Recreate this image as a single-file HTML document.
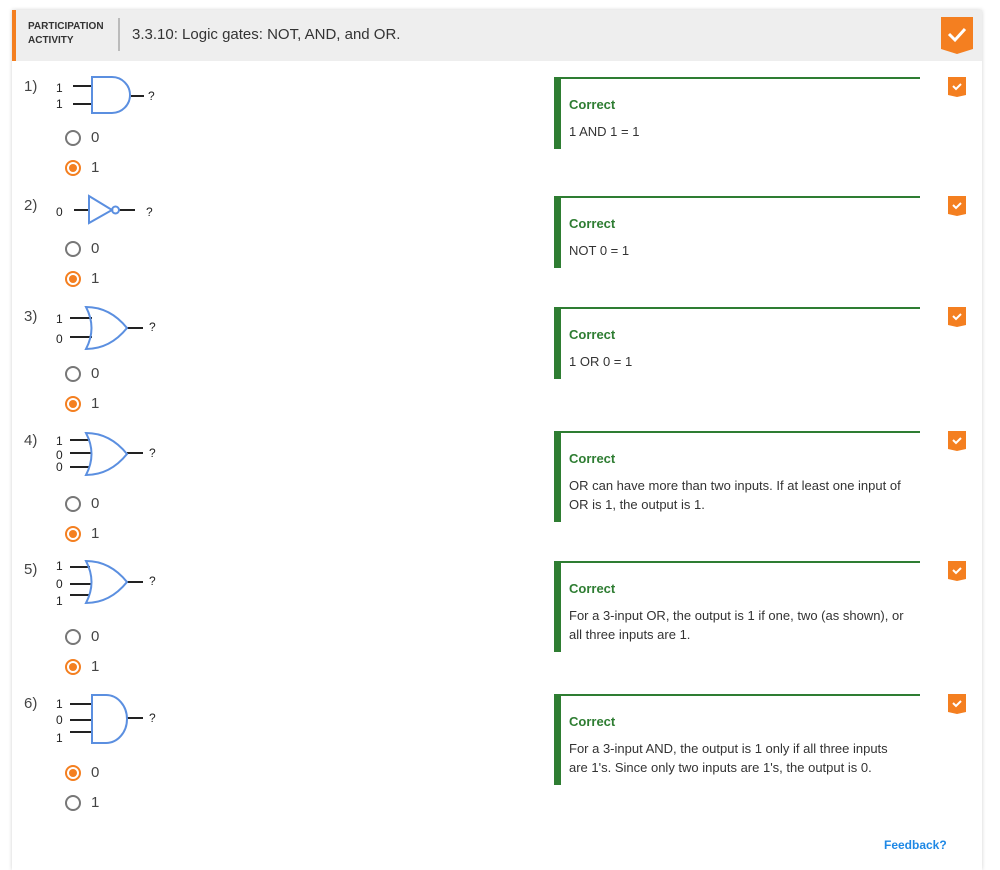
<!DOCTYPE html>
<html><head><meta charset="utf-8"><style>
body{margin:0;background:#fff;font-family:"Liberation Sans",sans-serif;color:#333;width:1000px;height:848px;overflow:hidden;position:relative}
.card{position:absolute;left:12px;top:10px;width:970px;height:860px;background:#fff;box-shadow:0 0 4px rgba(0,0,0,.18)}
.hdr{position:absolute;left:12px;top:10px;width:970px;height:51px;background:#eee;}
.hdr .bar{position:absolute;left:0;top:0;width:4px;height:51px;background:#f47f20}
.pa{position:absolute;left:28px;top:20px;font-size:10px;font-weight:bold;line-height:14px;color:#333}
.sep{position:absolute;left:118px;top:18px;width:2px;height:33px;background:#bbb}
.title{position:absolute;left:132px;top:26px;font-size:15px;color:#333}
.a{position:absolute}
.num{position:absolute;left:24px;font-size:15px;color:#444}
.r{position:absolute;left:65px;width:12px;height:12px;border:2px solid #777;border-radius:50%}
.r.on{border-color:#f47f20}
.r.on::after{content:"";position:absolute;left:2px;top:2px;width:8px;height:8px;border-radius:50%;background:#f47f20}
.rl{position:absolute;left:91px;font-size:15px;color:#444}
.fb{position:absolute;left:554px;width:359px;border-left:7px solid #2e7d32;border-top:2px solid #2e7d32}
.fb b{position:absolute;left:8px;top:18px;font-size:13px;color:#2e7d32}
.fb p{position:absolute;left:8px;top:43px;margin:0;font-size:13px;line-height:19px;color:#333;width:340px}
.bd{position:absolute;left:948px;width:18px;height:20px}
</style></head><body>
<div class="card"></div>
<div class="hdr"><div class="bar"></div></div>
<div class="pa">PARTICIPATION<br>ACTIVITY</div>
<div class="sep"></div>
<div class="title">3.3.10: Logic gates: NOT, AND, and OR.</div>
<svg class="a" style="left:941px;top:17px" width="32" height="37" viewBox="0 0 32 37"><path d="M0 0H32V32L16 37L0 32Z" fill="#f47f20"/><path d="M8 17L14 23L24 12" stroke="#fff" stroke-width="3" fill="none"/></svg>

<svg class="a" style="left:0;top:0" width="200" height="848" font-family="Liberation Sans,sans-serif" font-size="12" fill="#222">
<g stroke="#222" stroke-width="2">
<path d="M73 86H92M73 104H92M131 96H144"/>
<path d="M74 210H89M119 210H135"/>
<path d="M70 318H92M70 337H92M127 328H143"/>
<path d="M70 440H90M70 453H92M70 467H90M127 453H143"/>
<path d="M70 567H90M70 584H92M70 595H90M127 582H143"/>
<path d="M70 704H92M70 720H92M70 732H92M127 718H143"/>
</g>
<g stroke="#5b8fe0" stroke-width="2" fill="none">
<path d="M92 77H112A18 18 0 0 1 112 113H92Z"/>
<path d="M89 196L112 210L89 223Z"/><circle cx="115.5" cy="210" r="3.5"/>
<path d="M86 307Q110 307 127 328Q110 349 86 349Q97 328 86 307Z"/>
<path d="M86 433Q110 433 127 454Q110 475 86 475Q97 454 86 433Z"/>
<path d="M86 561Q110 561 127 582Q110 603 86 603Q97 582 86 561Z"/>
<path d="M92 695H106A21 24 0 0 1 106 743H92Z"/>
</g>
<text x="56" y="92">1</text><text x="56" y="108">1</text><text x="148" y="100">?</text>
<text x="56" y="216">0</text><text x="146" y="216">?</text>
<text x="56" y="323">1</text><text x="56" y="343">0</text><text x="149" y="331">?</text>
<text x="56" y="445">1</text><text x="56" y="459">0</text><text x="56" y="471">0</text><text x="149" y="457">?</text>
<text x="56" y="570">1</text><text x="56" y="588">0</text><text x="56" y="605">1</text><text x="149" y="585">?</text>
<text x="56" y="708">1</text><text x="56" y="724">0</text><text x="56" y="742">1</text><text x="149" y="722">?</text>
</svg>

<div class="num" style="top:78px">1)</div>
<div class="r" style="top:130px"></div><div class="rl" style="top:129px">0</div>
<div class="r on" style="top:160px"></div><div class="rl" style="top:159px">1</div>
<div class="num" style="top:197px">2)</div>
<div class="r" style="top:241px"></div><div class="rl" style="top:240px">0</div>
<div class="r on" style="top:271px"></div><div class="rl" style="top:270px">1</div>
<div class="num" style="top:308px">3)</div>
<div class="r" style="top:366px"></div><div class="rl" style="top:365px">0</div>
<div class="r on" style="top:396px"></div><div class="rl" style="top:395px">1</div>
<div class="num" style="top:432px">4)</div>
<div class="r" style="top:496px"></div><div class="rl" style="top:495px">0</div>
<div class="r on" style="top:526px"></div><div class="rl" style="top:525px">1</div>
<div class="num" style="top:561px">5)</div>
<div class="r" style="top:629px"></div><div class="rl" style="top:628px">0</div>
<div class="r on" style="top:659px"></div><div class="rl" style="top:658px">1</div>
<div class="num" style="top:695px">6)</div>
<div class="r on" style="top:765px"></div><div class="rl" style="top:764px">0</div>
<div class="r" style="top:795px"></div><div class="rl" style="top:794px">1</div>

<div class="fb" style="top:77px;height:70px"><b>Correct</b><p>1 AND 1 = 1</p></div>
<div class="fb" style="top:196px;height:70px"><b>Correct</b><p>NOT 0 = 1</p></div>
<div class="fb" style="top:307px;height:70px"><b>Correct</b><p>1 OR 0 = 1</p></div>
<div class="fb" style="top:431px;height:89px"><b>Correct</b><p>OR can have more than two inputs. If at least one input of OR is 1, the output is 1.</p></div>
<div class="fb" style="top:561px;height:89px"><b>Correct</b><p>For a 3-input OR, the output is 1 if one, two (as shown), or all three inputs are 1.</p></div>
<div class="fb" style="top:694px;height:89px"><b>Correct</b><p>For a 3-input AND, the output is 1 only if all three inputs are 1's. Since only two inputs are 1's, the output is 0.</p></div>

<svg class="bd" style="top:77px" viewBox="0 0 18 20"><path d="M0 0H18V18L9 20L0 18Z" fill="#f47f20"/><path d="M5 9L8 12L13 7" stroke="#fff" stroke-width="2" fill="none"/></svg>
<svg class="bd" style="top:196px" viewBox="0 0 18 20"><path d="M0 0H18V18L9 20L0 18Z" fill="#f47f20"/><path d="M5 9L8 12L13 7" stroke="#fff" stroke-width="2" fill="none"/></svg>
<svg class="bd" style="top:307px" viewBox="0 0 18 20"><path d="M0 0H18V18L9 20L0 18Z" fill="#f47f20"/><path d="M5 9L8 12L13 7" stroke="#fff" stroke-width="2" fill="none"/></svg>
<svg class="bd" style="top:431px" viewBox="0 0 18 20"><path d="M0 0H18V18L9 20L0 18Z" fill="#f47f20"/><path d="M5 9L8 12L13 7" stroke="#fff" stroke-width="2" fill="none"/></svg>
<svg class="bd" style="top:561px" viewBox="0 0 18 20"><path d="M0 0H18V18L9 20L0 18Z" fill="#f47f20"/><path d="M5 9L8 12L13 7" stroke="#fff" stroke-width="2" fill="none"/></svg>
<svg class="bd" style="top:694px" viewBox="0 0 18 20"><path d="M0 0H18V18L9 20L0 18Z" fill="#f47f20"/><path d="M5 9L8 12L13 7" stroke="#fff" stroke-width="2" fill="none"/></svg>

<div class="a" style="left:884px;top:838px;font-size:12px;font-weight:bold;color:#1e88e5">Feedback?</div>
</body></html>
